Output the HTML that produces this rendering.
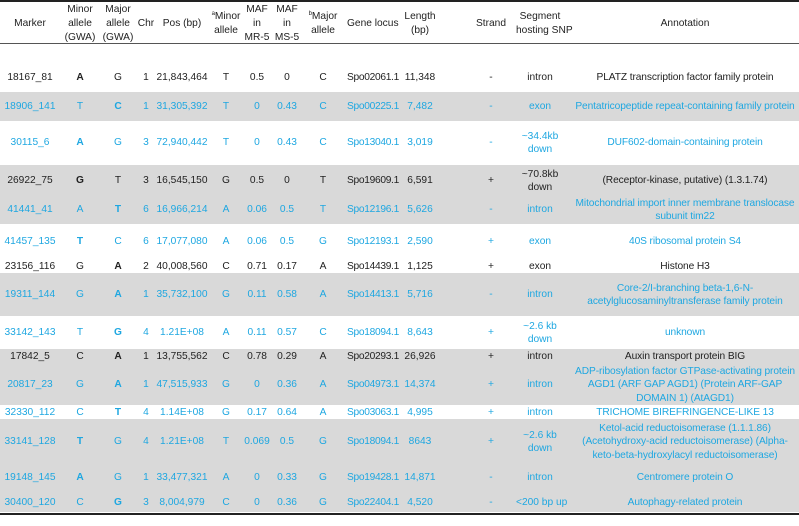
<!DOCTYPE html>
<html><head><meta charset="utf-8"><style>
html,body{margin:0;padding:0;background:#fff;}
body{width:799px;height:516px;position:relative;overflow:hidden;font-family:"Liberation Sans",sans-serif;font-size:10.2px;color:#222;}
.band{position:absolute;left:0;width:799px;background:#d9d9d9;}
.r{position:absolute;left:0;width:799px;height:46px;display:grid;grid-template-columns:60px 40px 36px 20px 52px 36px 26px 34px 38px 58px 40px 26px 50px 48px 8px 226px;align-items:center;text-align:center;line-height:13.3px;}
.r>div{white-space:nowrap;}
.r>div.an{white-space:normal;letter-spacing:-0.1px;}
.r>div.g{text-align:left;padding-left:5px;letter-spacing:-0.3px;}
.b{color:#1ea7e1;}
.bo{font-weight:bold;}
.h{position:absolute;left:0;top:3px;width:799px;height:41px;display:grid;grid-template-columns:60px 40px 36px 20px 52px 36px 26px 34px 38px 58px 40px 26px 50px 48px 8px 226px;align-items:center;text-align:center;line-height:14px;}
.h>div{white-space:nowrap;}
sup{font-size:6px;vertical-align:top;line-height:8px;}
.line{position:absolute;left:0;width:799px;background:#222;}
</style></head><body>
<div class="line" style="top:0;height:2px"></div>
<div class="line" style="top:43px;height:1px;background:#555"></div>
<div class="line" style="top:513px;height:2px"></div>

<div class="band" style="top:92px;height:29px"></div>
<div class="band" style="top:165px;height:59px"></div>
<div class="band" style="top:273px;height:43px"></div>
<div class="band" style="top:349px;height:56px"></div>
<div class="band" style="top:419px;height:93px"></div>

<div class="h">
<div>Marker</div><div>Minor<br>allele<br>(GWA)</div><div>Major<br>allele<br>(GWA)</div><div>Chr</div><div>Pos (bp)</div><div><sup>a</sup>Minor<br>allele</div><div>MAF<br>in<br>MR-5</div><div>MAF<br>in<br>MS-5</div><div><sup>b</sup>Major<br>allele</div><div style="text-align:left;padding-left:5px">Gene locus</div><div>Length<br>(bp)</div><div></div><div>Strand</div><div>Segment<br>hosting SNP</div><div></div><div>Annotation</div>
</div>

<div class="r" style="top:55px"><div>18167_81</div><div class="bo">A</div><div>G</div><div>1</div><div>21,843,464</div><div>T</div><div>0.5</div><div>0</div><div>C</div><div class="g">Spo02061.1</div><div>11,348</div><div></div><div>-</div><div>intron</div><div></div><div class="an">PLATZ transcription factor family protein</div></div>

<div class="r b" style="top:84px"><div>18906_141</div><div>T</div><div class="bo">C</div><div>1</div><div>31,305,392</div><div>T</div><div>0</div><div>0.43</div><div>C</div><div class="g">Spo00225.1</div><div>7,482</div><div></div><div>-</div><div>exon</div><div></div><div class="an">Pentatricopeptide repeat-containing family protein</div></div>

<div class="r b" style="top:120px"><div>30115_6</div><div class="bo">A</div><div>G</div><div>3</div><div>72,940,442</div><div>T</div><div>0</div><div>0.43</div><div>C</div><div class="g">Spo13040.1</div><div>3,019</div><div></div><div>-</div><div>~34.4kb<br>down</div><div></div><div class="an">DUF602-domain-containing protein</div></div>

<div class="r" style="top:158px"><div>26922_75</div><div class="bo">G</div><div>T</div><div>3</div><div>16,545,150</div><div>G</div><div>0.5</div><div>0</div><div>T</div><div class="g">Spo19609.1</div><div>6,591</div><div></div><div>+</div><div>~70.8kb<br>down</div><div></div><div class="an">(Receptor-kinase, putative) (1.3.1.74)</div></div>

<div class="r b" style="top:187px"><div>41441_41</div><div>A</div><div class="bo">T</div><div>6</div><div>16,966,214</div><div>A</div><div>0.06</div><div>0.5</div><div>T</div><div class="g">Spo12196.1</div><div>5,626</div><div></div><div>-</div><div>intron</div><div></div><div class="an">Mitochondrial import inner membrane translocase subunit tim22</div></div>

<div class="r b" style="top:219px"><div>41457_135</div><div class="bo">T</div><div>C</div><div>6</div><div>17,077,080</div><div>A</div><div>0.06</div><div>0.5</div><div>G</div><div class="g">Spo12193.1</div><div>2,590</div><div></div><div>+</div><div>exon</div><div></div><div class="an">40S ribosomal protein S4</div></div>

<div class="r" style="top:244px"><div>23156_116</div><div>G</div><div class="bo">A</div><div>2</div><div>40,008,560</div><div>C</div><div>0.71</div><div>0.17</div><div>A</div><div class="g">Spo14439.1</div><div>1,125</div><div></div><div>+</div><div>exon</div><div></div><div class="an">Histone H3</div></div>

<div class="r b" style="top:272px"><div>19311_144</div><div>G</div><div class="bo">A</div><div>1</div><div>35,732,100</div><div>G</div><div>0.11</div><div>0.58</div><div>A</div><div class="g">Spo14413.1</div><div>5,716</div><div></div><div>-</div><div>intron</div><div></div><div class="an">Core-2/I-branching beta-1,6-N-acetylglucosaminyltransferase family protein</div></div>

<div class="r b" style="top:310px"><div>33142_143</div><div>T</div><div class="bo">G</div><div>4</div><div>1.21E+08</div><div>A</div><div>0.11</div><div>0.57</div><div>C</div><div class="g">Spo18094.1</div><div>8,643</div><div></div><div>+</div><div>~2.6 kb<br>down</div><div></div><div class="an">unknown</div></div>

<div class="r" style="top:334px"><div>17842_5</div><div>C</div><div class="bo">A</div><div>1</div><div>13,755,562</div><div>C</div><div>0.78</div><div>0.29</div><div>A</div><div class="g">Spo20293.1</div><div>26,926</div><div></div><div>+</div><div>intron</div><div></div><div class="an">Auxin transport protein BIG</div></div>

<div class="r b" style="top:362px"><div>20817_23</div><div>G</div><div class="bo">A</div><div>1</div><div>47,515,933</div><div>G</div><div>0</div><div>0.36</div><div>A</div><div class="g">Spo04973.1</div><div>14,374</div><div></div><div>+</div><div>intron</div><div></div><div class="an">ADP-ribosylation factor GTPase-activating protein AGD1 (ARF GAP AGD1) (Protein ARF-GAP DOMAIN 1) (AtAGD1)</div></div>

<div class="r b" style="top:390px"><div>32330_112</div><div>C</div><div class="bo">T</div><div>4</div><div>1.14E+08</div><div>G</div><div>0.17</div><div>0.64</div><div>A</div><div class="g">Spo03063.1</div><div>4,995</div><div></div><div>+</div><div>intron</div><div></div><div class="an">TRICHOME BIREFRINGENCE-LIKE 13</div></div>

<div class="r b" style="top:419px"><div>33141_128</div><div class="bo">T</div><div>G</div><div>4</div><div>1.21E+08</div><div>T</div><div>0.069</div><div>0.5</div><div>G</div><div class="g">Spo18094.1</div><div>8643</div><div></div><div>+</div><div>~2.6 kb<br>down</div><div></div><div class="an">Ketol-acid reductoisomerase (1.1.1.86) (Acetohydroxy-acid reductoisomerase) (Alpha-keto-beta-hydroxylacyl reductoisomerase)</div></div>

<div class="r b" style="top:455px"><div>19148_145</div><div class="bo">A</div><div>G</div><div>1</div><div>33,477,321</div><div>A</div><div>0</div><div>0.33</div><div>G</div><div class="g">Spo19428.1</div><div>14,871</div><div></div><div>-</div><div>intron</div><div></div><div class="an">Centromere protein O</div></div>

<div class="r b" style="top:480px"><div>30400_120</div><div>C</div><div class="bo">G</div><div>3</div><div>8,004,979</div><div>C</div><div>0</div><div>0.36</div><div>G</div><div class="g">Spo22404.1</div><div>4,520</div><div></div><div>-</div><div>&lt;200 bp up</div><div></div><div class="an">Autophagy-related protein</div></div>
</body></html>
